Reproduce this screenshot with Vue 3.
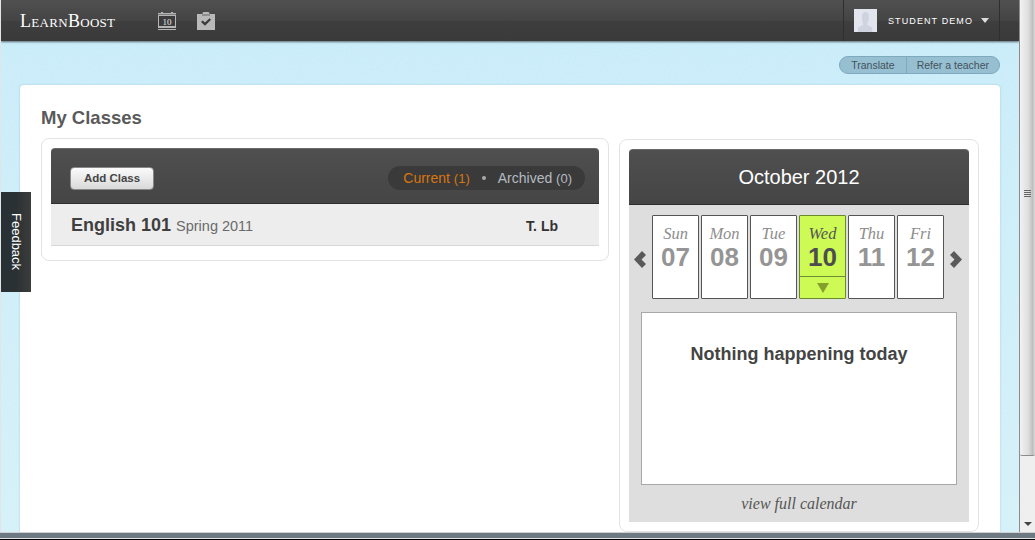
<template>
  <div class="window">
    <div class="main">
      <div class="page">
        <!-- noise behind everything, the page background is slightly grainy -->
        <svg class="grain" width="1018" height="532">
          <filter id="grain-noise">
            <feTurbulence type="fractalNoise" baseFrequency="0.7" numOctaves="2" />
            <feColorMatrix values="0 0 0 0 1  0 0 0 0 1  0 0 0 0 1  0.6 0 0 0 -0.1" />
          </filter>
          <rect width="1018" height="532" filter="url(#grain-noise)" opacity="0.35" />
        </svg>

        <header class="topbar">
          <div class="brand">LearnBoost</div>
          <nav class="nav-icons">
            <svg class="ico" width="18" height="18" viewBox="0 0 18 18">
              <path d="M0 1h18v1.500H0zM3 0h2v2H3zM13 0h2v2h-2z" fill="#b5b5b5" />
              <rect x="0.5" y="3.5" width="17" height="11" fill="#3c3c3c" stroke="#b5b5b5" />
              <rect x="0" y="15" width="18" height="1" fill="#b5b5b5" />
              <rect x="0" y="17" width="18" height="1" fill="#b5b5b5" />
              <text x="9" y="12.500" text-anchor="middle" class="ico-num">10</text>
            </svg>
            <svg class="ico" width="18" height="18" viewBox="0 0 18 18">
              <path d="M0 2h5.500V1Q6 0 7 0h4q1 0 1.500 1v1H18v16H0z" fill="#b9b9b9" />
              <rect x="5" y="2" width="8" height="2" fill="#8e8e8e" />
              <path d="M4 10l1.600-1.600L8 10.600l4.600-4.400L14 7.700l-6 6z" fill="#3b3b3b" />
            </svg>
          </nav>
          <div class="user">
            <div class="avatar">
              <svg width="23" height="23" viewBox="0 0 23 23">
                <rect width="23" height="23" fill="#e2e5ee" />
                <path d="M8 8q0-5 3.500-5T15 8q0 4-1.700 6v2l5 2.500V23H4v-4.500l5-2.500v-2Q8 12 8 8z" fill="#cfd3e0" />
              </svg>
            </div>
            <span class="user-name">STUDENT DEMO</span>
            <span class="caret"></span>
          </div>
        </header>

        <div class="util-row">
          <div class="util-pill">
            <span class="util-item">Translate</span>
            <span class="util-item">Refer a teacher</span>
          </div>
        </div>

        <div class="feedback"><span>Feedback</span></div>

        <main class="card">
          <h1 class="title">My Classes</h1>
          <div class="columns">
            <section class="panel classes">
              <div class="dark-head classes-head">
                <button class="add-btn">Add Class</button>
                <div class="filter">
                  <span class="current">Current <small>(1)</small></span>
                  <span class="dot"></span>
                  <span class="archived">Archived <small>(0)</small></span>
                </div>
              </div>
              <div class="class-row">
                <div>
                  <strong class="class-name">English 101</strong>
                  <span class="class-term">Spring 2011</span>
                </div>
                <span class="class-teacher">T. Lb</span>
              </div>
            </section>

            <section class="panel calendar">
              <div class="dark-head month">October 2012</div>
              <div class="cal-body">
                <div class="week">
                  <svg class="arrow" width="12" height="17" viewBox="0 0 12 17">
                    <path d="M8 0l4 4-4.500 4.500L12 13l-4 4L0 8.500z" fill="#5a5a5a" />
                  </svg>
                  <div v-for="d in days" :key="d.num" class="day" :class="{ today: d.today }">
                    <em class="day-name">{{ d.name }}</em>
                    <b class="day-num">{{ d.num }}</b>
                    <div v-if="d.today" class="day-mark"><span class="mark-arrow"></span></div>
                  </div>
                  <svg class="arrow" width="12" height="17" viewBox="0 0 12 17">
                    <path d="M4 0L0 4l4.500 4.500L0 13l4 4 8-8.500z" fill="#5a5a5a" />
                  </svg>
                </div>
                <div class="events">Nothing happening today</div>
                <div class="full-link">view full calendar</div>
              </div>
            </section>
          </div>
        </main>
      </div>

      <div class="scrollbar">
        <div class="sb-thumb"><span class="sb-grip"></span></div>
        <div class="sb-track"></div>
        <div class="sb-btn"><span class="sb-down"></span></div>
      </div>
    </div>
    <div class="taskbar"></div>
  </div>
</template>

<script setup>
const days = [
  { name: 'Sun', num: '07' },
  { name: 'Mon', num: '08' },
  { name: 'Tue', num: '09' },
  { name: 'Wed', num: '10', today: true },
  { name: 'Thu', num: '11' },
  { name: 'Fri', num: '12' }
]
</script>

<style>
html, body { margin: 0; overflow: hidden; }
</style>

<style scoped>
.window {
  width: 1035px;
  height: 540px;
  display: flex;
  flex-direction: column;
  overflow: hidden;
  font-family: "Liberation Sans", Arial, sans-serif;
  background: #e4e4e4;
}
.main { flex: 1; display: flex; min-height: 0; padding-left: 1px; }
.page {
  position: relative;
  isolation: isolate;
  flex: 1;
  min-width: 0;
  overflow: hidden;
  background: linear-gradient(#c6ebf9, #d3f0f8);
}
.grain { position: absolute; left: 0; top: 0; z-index: -1; }

.topbar {
  height: 41px;
  display: flex;
  align-items: center;
  padding-left: 19px;
  background: linear-gradient(#505050, #444 50%, #3e3e3e 50%, #3a3a3a);
  box-shadow: 0 1px 2px rgba(60, 70, 80, 0.8);
}
.brand {
  width: 138px;
  margin-top: 1px;
  color: #fff;
  font-family: "Liberation Serif", serif;
  font-size: 18px;
  font-variant: small-caps;
  letter-spacing: 0.3px;
}
.nav-icons { display: flex; gap: 21px; }
.ico { display: block; }
.ico-num { font: 9px "Liberation Serif", serif; fill: #e8e8e8; }
.user {
  margin-left: auto;
  margin-right: 19px;
  height: 41px;
  width: 157px;
  box-sizing: border-box;
  padding-left: 10px;
  display: flex;
  align-items: center;
  border-left: 1px solid #2f2f2f;
  border-right: 1px solid #2f2f2f;
}
.avatar { width: 23px; height: 23px; margin-right: 11px; }
.avatar svg { display: block; }
.user-name { color: #fff; font-size: 9px; letter-spacing: 1.1px; }
.caret {
  margin-left: 8px;
  border-left: 4px solid transparent;
  border-right: 4px solid transparent;
  border-top: 5px solid #ddd;
}

.util-row { display: flex; justify-content: flex-end; padding: 15px 19px 0 0; }
.util-pill {
  display: flex;
  height: 18px;
  box-sizing: border-box;
  border: 1px solid #7fa9bd;
  border-radius: 9px;
  background: #96bfd1;
  color: #44525c;
  font-size: 10.5px;
  line-height: 17px;
  overflow: hidden;
}
.util-item { padding: 0 11px; }
.util-item + .util-item { border-left: 1px solid #7fa9bd; padding: 0 10px; }

.feedback {
  position: absolute;
  left: 0;
  top: 192px;
  width: 30px;
  height: 100px;
  display: flex;
  align-items: center;
  justify-content: center;
  background: linear-gradient(90deg, #273136, #2b3133 50%, #3c3c3c);
  color: #fff;
  font-size: 13px;
}
.feedback span { writing-mode: vertical-rl; }

.card {
  margin: 11px 19px 0;
  height: 460px;
  box-sizing: border-box;
  padding: 22px 21px 0;
  background: #fff;
  border-radius: 4px 4px 0 0;
  box-shadow: 0 0 2px rgba(120, 170, 190, 0.6);
}
.title {
  margin: 0 0 10px;
  color: #5a5a5a;
  font-size: 18.5px;
  line-height: 21px;
  font-weight: bold;
}
.columns { display: flex; align-items: flex-start; gap: 10px; }
.panel {
  box-sizing: border-box;
  border: 1px solid #e3e3e3;
  border-radius: 8px;
  padding: 9px;
}
.classes { width: 568px; height: 123px; }
.calendar { width: 360px; height: 393px; margin-top: 1px; }
.dark-head {
  background: linear-gradient(#4f4f4f, #454545);
  border-top: 1px solid #6a6a6a;
  border-bottom: 1px solid #2e2e2e;
  border-radius: 4px 4px 0 0;
  box-sizing: border-box;
}
.classes-head {
  height: 56px;
  display: flex;
  align-items: center;
  justify-content: space-between;
  padding: 4px 14px 0 19px;
}
.add-btn {
  width: 84px;
  height: 23px;
  padding: 0;
  border: 1px solid #888;
  border-radius: 4px;
  background: linear-gradient(#fbfbfb, #d9d9d9);
  color: #444;
  font: bold 11.5px "Liberation Sans", Arial, sans-serif;
}
.filter {
  height: 24px;
  display: flex;
  align-items: center;
  padding: 0 13px 0 15px;
  border-radius: 12px;
  background: #3a3a3a;
  font-size: 14px;
}
.filter small { font-size: 13px; }
.current { color: #d9760f; }
.archived { color: #b4bac2; }
.dot {
  width: 4px;
  height: 4px;
  margin: 0 12px 0 12px;
  border-radius: 50%;
  background: #aaa;
}
.class-row {
  height: 42px;
  box-sizing: border-box;
  display: flex;
  align-items: center;
  justify-content: space-between;
  padding: 2px 41px 0 20px;
  background: #ededed;
  border-bottom: 1px solid #d8d8d8;
}
.class-name { color: #3f3f3f; font-size: 18px; }
.class-term { margin-left: 5px; color: #6a6a6a; font-size: 14.500px; }
.class-teacher { color: #333; font-size: 14px; font-weight: bold; }

.month {
  height: 56px;
  color: #fff;
  font-size: 20px;
  line-height: 54px;
  text-align: center;
}
.cal-body {
  height: 317px;
  box-sizing: border-box;
  padding: 10px 12px 0;
  background: #dedede;
}
.week {
  display: flex;
  align-items: flex-start;
  justify-content: center;
  gap: 2px;
  margin: 0 -10px 0 -12px;
}
.arrow { margin-top: 36px; flex: none; }
.arrow:first-child { margin-right: 4px; }
.arrow:last-child { margin-left: 4px; }
.day {
  width: 47px;
  height: 84px;
  box-sizing: border-box;
  display: flex;
  flex-direction: column;
  align-items: center;
  background: #fff;
  border: 1px solid #555;
  border-radius: 1px;
}
.day-name {
  margin-top: 10px;
  color: #8d8d8d;
  font-family: "Liberation Serif", serif;
  font-size: 16.500px;
  line-height: 16px;
}
.day-num {
  margin-top: 2px;
  color: #959595;
  font-size: 26px;
  line-height: 27px;
}
.today { background: #cdfa55; border-color: #6a8a2a; }
.today .day-name { color: #555; }
.today .day-num { color: #4d4d4d; }
.day-mark {
  align-self: stretch;
  margin-top: auto;
  height: 21px;
  display: flex;
  align-items: center;
  justify-content: center;
  border-top: 1px solid #708a33;
}
.mark-arrow {
  border-left: 6px solid transparent;
  border-right: 6px solid transparent;
  border-top: 10px solid #84a02c;
}
.events {
  margin-top: 13px;
  height: 173px;
  box-sizing: border-box;
  padding-top: 30px;
  background: #fff;
  border: 1px solid #a8a8a8;
  color: #444;
  font-size: 18px;
  font-weight: bold;
  line-height: 22px;
  text-align: center;
}
.full-link {
  margin-top: 10px;
  color: #555;
  font-family: "Liberation Serif", serif;
  font-size: 16px;
  font-style: italic;
  line-height: 18px;
  text-align: center;
}

.scrollbar {
  width: 16px;
  display: flex;
  flex-direction: column;
  background: #efefef;
  border-left: 1px solid #8c8c8c;
  box-sizing: border-box;
}
.sb-btn { height: 17px; display: flex; align-items: center; justify-content: center; }
.sb-down { border-left: 4px solid transparent; border-right: 4px solid transparent; border-top: 4px solid #444; }
.sb-thumb {
  height: 456px;
  box-sizing: border-box;
  padding-top: 190px;
  display: flex;
  justify-content: center;
  background: linear-gradient(90deg, #f2f2f2, #dedede 55%, #bdbdbd 85%, #dcdcdc);
  border-bottom: 1px solid #8c8c8c;
  border-radius: 0 0 2px 2px;
}
.sb-grip {
  width: 7px;
  height: 7px;
  background: repeating-linear-gradient(#666 0 1px, transparent 1px 2px);
}
.sb-track { flex: 1; }

.taskbar {
  height: 8px;
  flex: none;
  background: linear-gradient(#d0d0d0 0 1px, #6d7983 1px 6px, #dfe3e6 6px 7px, #000 7px);
}
</style>
